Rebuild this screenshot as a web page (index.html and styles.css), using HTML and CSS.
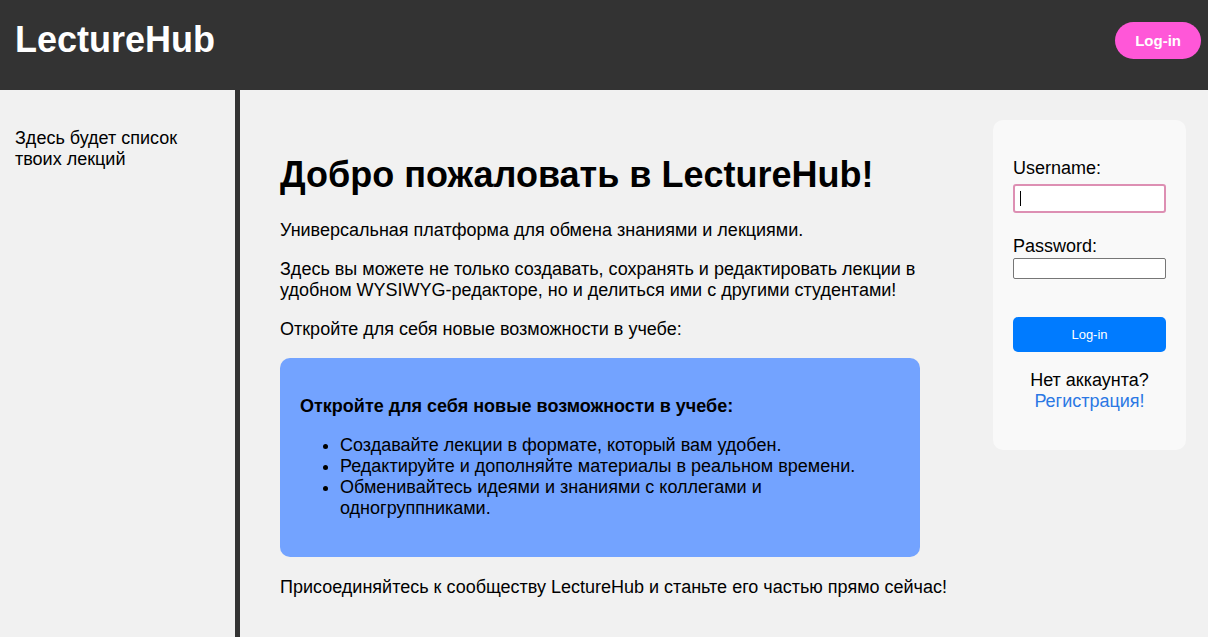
FILE: index.html
```html
<!DOCTYPE html>
<html lang="ru">
<head>
<meta charset="utf-8">
<meta name="viewport" content="width=device-width, initial-scale=1">
<title>LectureHub</title>
<link rel="stylesheet" href="styles.css">
</head>
<body>
<header class="header">
  <h1 class="logo">LectureHub</h1>
  <button class="login-toggle" type="button">Log-in</button>
</header>
<div class="layout">
  <aside class="sidebar"><p>Здесь будет список твоих лекций</p></aside>
  <main class="content">
    <h1 class="title">Добро пожаловать в LectureHub!</h1>
    <p>Универсальная платформа для обмена знаниями и лекциями.</p>
    <p>Здесь вы можете не только создавать, сохранять и редактировать лекции в удобном WYSIWYG-редакторе, но и делиться ими с другими студентами!</p>
    <p>Откройте для себя новые возможности в учебе:</p>
    <section class="features">
      <p><strong>Откройте для себя новые возможности в учебе:</strong></p>
      <ul>
        <li>Создавайте лекции в формате, который вам удобен.</li>
        <li>Редактируйте и дополняйте материалы в реальном времени.</li>
        <li>Обменивайтесь идеями и знаниями с коллегами и одногруппниками.</li>
      </ul>
    </section>
    <p class="join">Присоединяйтесь к сообществу LectureHub и станьте его частью прямо сейчас!</p>
  </main>
  <form class="login">
    <label for="username">Username:</label>
    <input class="field field-active" id="username" type="text" placeholder=" " autofocus>
    <label for="password">Password:</label>
    <input class="field" id="password" type="password">
    <button class="submit" type="submit">Log-in</button>
    <p class="register">Нет аккаунта? <a href="#register">Регистрация!</a></p>
  </form>
</div>
</body>
</html>
```
FILE: styles.css
```css
* { box-sizing: border-box; }
body {
  margin: 0;
  min-height: 100vh;
  display: flex;
  flex-direction: column;
  background: #f1f1f1;
  color: #000;
  font: 18px/21px "Liberation Sans", Arial, sans-serif;
}
.header {
  display: flex;
  justify-content: space-between;
  align-items: flex-start;
  min-height: 90px;
  padding: 19px 7px 0 15px;
  background: #333;
  color: #fff;
}
.logo { margin: 0; font-size: 36px; line-height: 42px; }
.login-toggle {
  margin-top: 3px;
  padding: 10px 20px;
  border: 0;
  border-radius: 20px;
  background: #ff57d8;
  color: #fff;
  font: bold 15px/17px "Liberation Sans", Arial, sans-serif;
}
.layout { flex: 1; display: flex; align-items: flex-start; }
.sidebar {
  align-self: stretch;
  flex: none;
  width: 240px;
  padding: 20px 15px;
  border-right: 5px solid #333;
}
p { margin: 18px 0; }
.content { flex: 1; min-width: 0; padding: 40px; }
.title { margin: 24px 0; font-size: 36px; line-height: 42px; }
.features {
  max-width: 640px;
  padding: 20px;
  border-radius: 10px;
  background: #73a3ff;
}
.features ul { margin: 18px 0; padding-left: 40px; }
.join { margin-top: 20px; }
.login {
  display: flex;
  flex-direction: column;
  flex: none;
  width: 193px;
  margin: 30px 22px 0 0;
  padding: 38px 20px;
  border-radius: 10px;
  background: #f9f9f9;
}
.field {
  width: 100%;
  height: 21px;
  margin: 1px 0 38px;
  padding: 1px 4px;
  border: 1px solid #767676;
  border-radius: 2px;
  background: #fff;
  font: 13px/15px "Liberation Sans", Arial, sans-serif;
}
.field-active {
  height: 29px;
  margin: 5px 0 23px;
  padding: 5px;
  border: 2px solid #dd8fb3;
  border-radius: 3px;
  outline: 0;
}
/* Steady caret while the field is empty */
.field-active:placeholder-shown {
  background: #fff linear-gradient(#000, #000) 5px center / 1px 15px no-repeat;
  caret-color: transparent;
}
.submit {
  height: 35px;
  border: 0;
  border-radius: 5px;
  background: #007bff;
  color: #fff;
  font: 13px/15px "Liberation Sans", Arial, sans-serif;
}
.register { margin: 18px 0 0; text-align: center; }
.register a { color: #2b78e4; text-decoration: none; }
```
